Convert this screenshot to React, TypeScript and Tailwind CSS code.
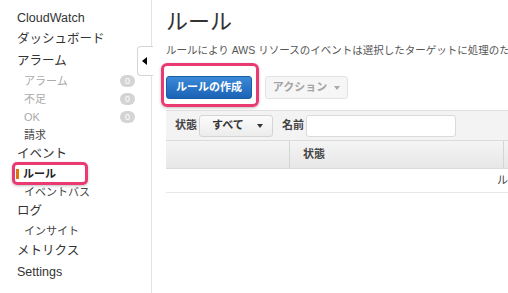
import React from "react";

type NavItem = {
    label: string;
    kind: "main" | "sub" | "muted" | "active";
    badge?: string;
    h: string;
};

const nav: NavItem[] = [
    { label: "CloudWatch", kind: "main", h: "h-[21px]" },
    { label: "ダッシュボード", kind: "main", h: "h-[21.5px]" },
    { label: "アラーム", kind: "main", h: "h-[21.5px]" },
    { label: "アラーム", kind: "muted", badge: "0", h: "h-[18px]" },
    { label: "不足", kind: "muted", badge: "0", h: "h-[18px]" },
    { label: "OK", kind: "muted", badge: "0", h: "h-[18px]" },
    { label: "請求", kind: "sub", h: "h-[18px]" },
    { label: "イベント", kind: "main", h: "h-[21px]" },
    { label: "ルール", kind: "active", h: "h-[18px]" },
    { label: "イベントバス", kind: "sub", h: "h-[18px]" },
    { label: "ログ", kind: "main", h: "h-[21px]" },
    { label: "インサイト", kind: "sub", h: "h-[18.5px]" },
    { label: "メトリクス", kind: "main", h: "h-[21px]" },
    { label: "Settings", kind: "main", h: "h-[21px]" },
];

function NavRow({ item }: { item: NavItem }) {
    if (item.kind === "main") {
        return (
            <div className={`${item.h} flex items-center text-[12.5px] text-[#333]`}>
                {item.label}
            </div>
        );
    }
    if (item.kind === "active") {
        return (
            <div className={`${item.h} flex items-center text-[11px] font-bold text-[#222]`}>
                <span className="w-[3px] h-[10px] bg-[#d9770f] mr-[4px] -ml-[1px]" />
                {item.label}
            </div>
        );
    }
    return (
        <div className={`${item.h} flex items-center justify-between pl-[7px] text-[11px] ${item.kind === "muted" ? "text-[#aaa]" : "text-[#444]"}`}>
            <span>{item.label}</span>
            {item.badge && (
                <span className="w-[15px] h-[12px] rounded-full bg-[#d4d4d4] text-white text-[9px] leading-[12px] text-center">
                    {item.badge}
                </span>
            )}
        </div>
    );
}

export default function App() {
    return (
        <div className="relative w-[508px] h-[293px] overflow-hidden bg-white flex font-['Liberation_Sans','Noto_Sans_CJK_JP',sans-serif]">

            {/* sidebar */}
            <aside className="relative w-[152px] shrink-0 border-r border-[#e3e3e3] pt-[8px] pl-[17px] pr-[16px]">
                {nav.map((item, idx) => (
                    <NavRow key={idx} item={item} />
                ))}

                <div className="absolute left-[137px] top-[46px] w-[16px] h-[30px] bg-white border border-r-0 border-[#d4d4d4] rounded-l-[4px] flex items-center pl-[4px]">
                    <span className="w-0 h-0 border-y-[4px] border-y-transparent border-r-[5px] border-r-black" />
                </div>
            </aside>

            {/* main */}
            <main className="flex-1 min-w-0 pl-[14px] overflow-hidden">
                <h1 className="pt-[10px] text-[22px] leading-[24px] font-normal text-[#333] whitespace-nowrap">ルール</h1>
                <p className="mt-[9px] text-[10.5px] leading-[14px] text-[#555] whitespace-nowrap">
                    ルールにより AWS リソースのイベントは選択したターゲットに処理のために送信されます。
                </p>

                <div className="mt-[19px] flex items-center gap-[13px]">
                    <button className="h-[23px] w-[86px] rounded-[3px] border border-[#175fa6] bg-gradient-to-b from-[#3b8ad8] to-[#1b62b5] text-white text-[11px] font-bold">
                        ルールの作成
                    </button>
                    <button className="h-[23px] w-[83px] rounded-[3px] border border-[#e2e2e2] bg-[#f6f6f6] text-[#a4a4a4] text-[11px] font-bold flex items-center justify-center gap-[7px]">
                        アクション
                        <span className="w-0 h-0 border-x-[3px] border-x-transparent border-t-[4px] border-t-[#aaa]" />
                    </button>
                </div>

                <div className="mt-[11px] w-[700px] border-t border-[#e0e0e0] bg-[#f3f3f3] h-[30px] flex items-center pl-[9px] text-[11px] font-bold text-[#444]">
                    <span>状態</span>
                    <div className="ml-[2px] w-[74px] h-[22px] rounded-[3px] border border-[#d5d5d5] bg-gradient-to-b from-[#fbfbfb] to-[#ececec] flex items-center justify-between pl-[12px] pr-[9px] text-[#333]">
                        すべて
                        <span className="w-0 h-0 border-x-[3px] border-x-transparent border-t-[4px] border-t-[#333]" />
                    </div>
                    <span className="ml-[9px]">名前</span>
                    <div className="ml-[2px] w-[150px] h-[22px] rounded-[3px] border border-[#dadada] bg-white" />
                </div>

                <div className="w-[700px] h-[29px] flex border-t border-b border-[#dcdcdc] bg-gradient-to-b from-[#f4f4f4] to-[#e7e7e7] text-[11px] font-bold text-[#444]">
                    <div className="w-[124px] border-r border-[#d5d5d5]" />
                    <div className="w-[214px] border-r border-[#d5d5d5] flex items-center pl-[13px]">状態</div>
                    <div className="flex-1" />
                </div>

                <div className="w-[700px] h-[24px] border-b border-[#e6e6e6] flex items-center pl-[331px] text-[11px] text-[#444] whitespace-nowrap">
                    ルールがありません
                </div>
            </main>

            {/* annotation highlights */}
            <div className="absolute left-[12px] top-[162px] w-[76px] h-[23px] rounded-[5px] border-[3px] border-[#ea3a72] shadow-[0_1px_3px_rgba(0,0,0,0.25)]" />
            <div className="absolute left-[161px] top-[63px] w-[98px] h-[44px] rounded-[6px] border-[3px] border-[#ea3a72] shadow-[0_1px_3px_rgba(0,0,0,0.25)]" />
        </div>
    );
}
